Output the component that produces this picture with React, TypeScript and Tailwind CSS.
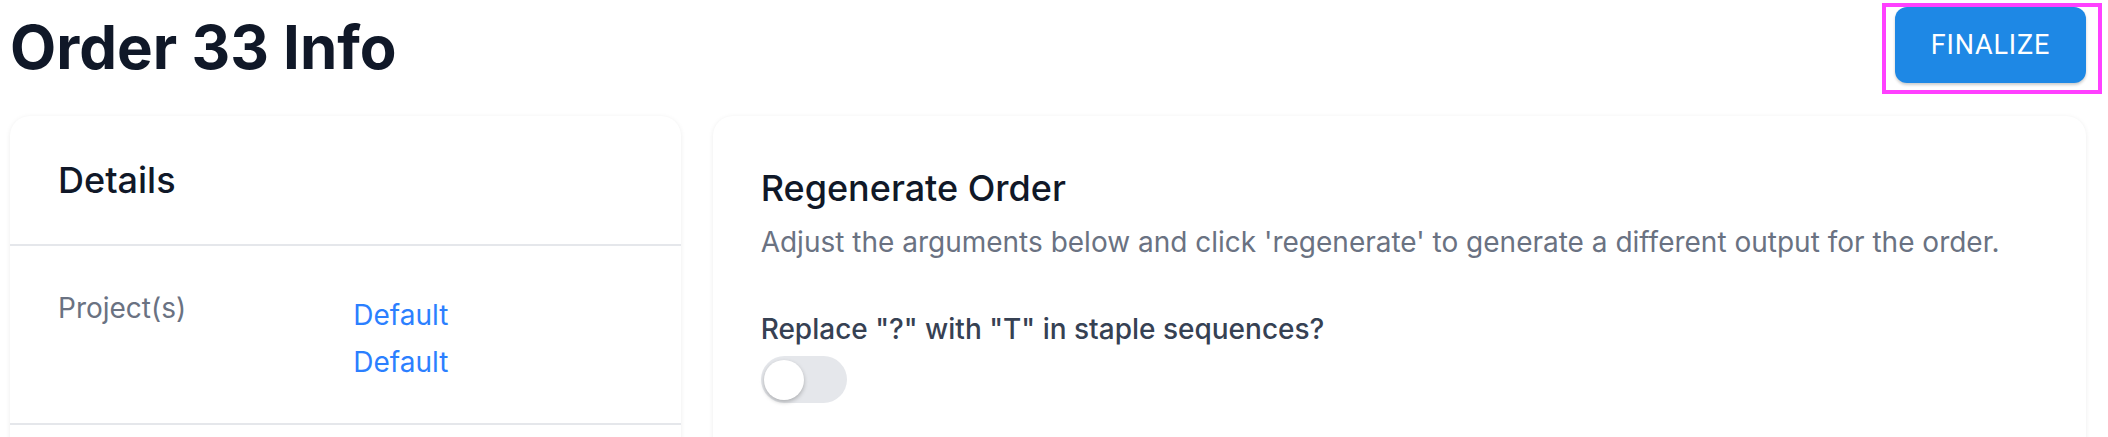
import { useState } from "react"

const font = { fontFamily: "Inter, 'Noto Sans', sans-serif" }

function Toggle() {
  const [on, setOn] = useState(false)
  return (
    <button
      type="button"
      onClick={() => setOn(!on)}
      className={`flex h-[47px] w-[86px] items-center rounded-full px-[3px] transition-colors ${
        on ? "bg-blue-500" : "bg-gray-200"
      }`}
    >
      <span
        className={`h-[40px] w-[40px] rounded-full bg-white shadow-[0_2px_4px_rgba(0,0,0,0.25)] transition-transform ${
          on ? "translate-x-[40px]" : "translate-x-0"
        }`}
      />
    </button>
  )
}

export default function App() {
  return (
    <div className="min-h-screen bg-white pl-[10px] pr-[22px]" style={font}>
      <div className="flex items-start justify-between">
        <h1 className="mt-[17px] text-[60px] font-bold leading-[60px] text-gray-900">
          Order 33 Info
        </h1>
        <div className="relative mt-[7px]">
          <button
            className="h-[76px] w-[191px] rounded-[12px] bg-[#1e88e5] text-[27px] font-normal uppercase tracking-[0.03em] text-white shadow-[0_2px_3px_rgba(0,0,0,0.2)]"
            style={{ fontFamily: "Roboto, 'Liberation Sans', sans-serif" }}
          >
            Finalize
          </button>
          <div className="pointer-events-none absolute -left-[13px] -right-[16px] -top-[4px] -bottom-[11px] border-[4px] border-[#ff40ff]" />
        </div>
      </div>

      <div className="mt-[33px] grid grid-cols-3 gap-8">
        <div className="rounded-[20px] bg-white shadow-[0_1px_5px_rgba(0,0,0,0.08)]">
          <div className="border-b-2 border-gray-200 px-12 py-[37px]">
            <h2 className="text-[36px] font-medium leading-[54px] text-gray-900">Details</h2>
          </div>
          <dl className="grid grid-cols-2 gap-4 border-b-2 border-gray-200 px-12 pb-[37px] pt-[41px]">
            <dt className="text-[28px] leading-[42px] text-gray-500">Project(s)</dt>
            <dd className="pt-[5px] text-[28px] leading-[47px] text-blue-500">
              <a href="#" className="block">Default</a>
              <a href="#" className="block">Default</a>
            </dd>
          </dl>
          <div className="h-10" />
        </div>

        <div className="col-span-2 rounded-[20px] bg-white px-12 pb-12 pt-[45px] shadow-[0_1px_5px_rgba(0,0,0,0.08)]">
          <h2 className="text-[36px] font-medium leading-[54px] text-gray-900">Regenerate Order</h2>
          <p className="mt-[6px] text-[28px] leading-[42px] text-gray-500">
            Adjust the arguments below and click 'regenerate' to generate a different output for the order.
          </p>
          <div className="mt-[45px]">
            <label className="block text-[28px] font-medium leading-[42px] text-gray-700">
              Replace "?" with "T" in staple sequences?
            </label>
            <div className="mt-[6px]">
              <Toggle />
            </div>
          </div>
        </div>
      </div>
    </div>
  )
}
